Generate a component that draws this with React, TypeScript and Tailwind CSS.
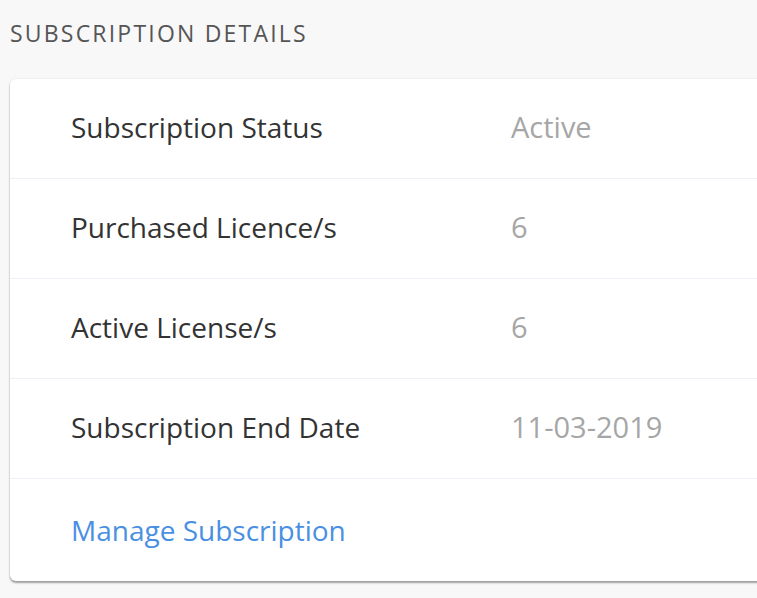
import React from 'react';

interface DetailRow {
  label: string;
  value: string;
}

const rows: DetailRow[] = [
  { label: 'Subscription Status', value: 'Active' },
  { label: 'Purchased Licence/s', value: '6' },
  { label: 'Active License/s', value: '6' },
  { label: 'Subscription End Date', value: '11-03-2019' },
];

const App: React.FC = () => {
  return (
    <div className="h-[598px] w-[757px] overflow-hidden bg-[#f8f8f8] pl-[10px] pt-[18px] font-['Open_Sans','Liberation_Sans',sans-serif]">
      <h1 className="text-[23px] leading-[30px] tracking-[2.2px] text-[#555]">SUBSCRIPTION DETAILS</h1>

      <div className="mt-[31px] w-[800px] rounded-[6px] bg-white shadow-[0_2px_2px_rgba(0,0,0,0.35),0_0_3px_rgba(0,0,0,0.08)]">
        {rows.map((row) => (
          <div key={row.label} className="flex h-[100px] items-center border-b border-[#eef2f6] pb-[4px] pl-[61px]">
            <span className="w-[440px] text-[28px] text-[#333]">{row.label}</span>
            <span className="text-[29px] text-[#a6a6a6]">{row.value}</span>
          </div>
        ))}
        <div className="flex h-[102px] items-center pl-[61px]">
          <a href="#" className="text-[28px] text-[#4a90e2]">
            Manage Subscription
          </a>
        </div>
      </div>
    </div>
  );
};

export default App;
